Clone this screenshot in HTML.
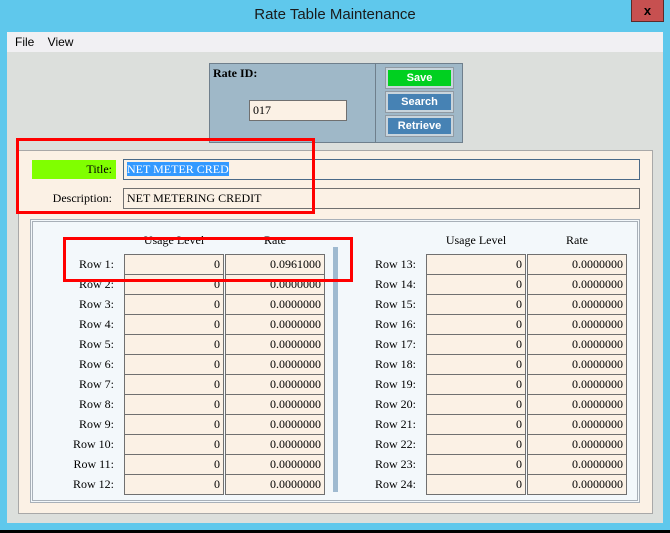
<!DOCTYPE html>
<html><head><style>
*{margin:0;padding:0;box-sizing:border-box}
body{width:670px;height:533px;background:#000;position:relative;overflow:hidden;font-family:"Liberation Serif",serif;font-size:12px;color:#000}
.a{position:absolute}
.inp{position:absolute;background:#fbf1e5;border:1px solid #707070;height:21px;line-height:19px;padding:0 3px;text-align:right;font-size:12px}
.lab{position:absolute;text-align:right;font-size:12px}
.btn{position:absolute;left:385px;width:69px;height:22px;border:1px solid #909aa3;background:#c8d4dc;padding:2px}
.btn div{height:100%;color:#fff;font-family:"Liberation Sans",sans-serif;font-weight:bold;font-size:11px;text-align:center;line-height:16px}
</style></head><body>
<div class="a" style="left:0;top:0;width:670px;height:530px;background:#5fc8ec"></div>
<div class="a" style="left:0;top:6px;width:670px;text-align:center;font-family:'Liberation Sans',sans-serif;font-size:15px;color:#1a1a1a">Rate Table Maintenance</div>
<div class="a" style="left:631px;top:0;width:33px;height:22px;background:#c75050;border:1px solid #5a2a2a;border-top:none;color:#000;font-family:'Liberation Sans',sans-serif;font-weight:bold;font-size:13px;text-align:center;line-height:22px">x</div>
<div class="a" style="left:7px;top:32px;width:656px;height:20px;background:#f1f0f3;font-family:'Liberation Sans',sans-serif;font-size:12px;line-height:20px;padding-left:8px">File&nbsp;&nbsp;&nbsp;&nbsp;View</div>
<div class="a" style="left:7px;top:52px;width:656px;height:471px;background:#dcdfdc"></div>
<!-- Rate ID panel -->
<div class="a" style="left:209px;top:63px;width:167px;height:80px;background:#9fb8c8;border:1px solid #6f7f8c"></div>
<div class="a" style="left:213px;top:66px;font-weight:bold">Rate ID:</div>
<div class="inp" style="left:249px;top:100px;width:98px;text-align:left">017</div>
<div class="a" style="left:375px;top:63px;width:88px;height:80px;background:#9fb8c8;border:1px solid #6f7f8c"></div>
<div class="btn" style="top:67px"><div style="background:#00d020">Save</div></div>
<div class="btn" style="top:91px"><div style="background:#4682b4">Search</div></div>
<div class="btn" style="top:115px"><div style="background:#4682b4">Retrieve</div></div>
<!-- beige panel -->
<div class="a" style="left:18px;top:150px;width:635px;height:364px;background:#fbf1e5;border:1px solid #a8a8a8"></div>
<div class="a" style="left:32px;top:160px;width:84px;height:19px;background:#80ff00;text-align:right;line-height:19px;padding-right:4px">Title:</div>
<div class="inp" style="left:123px;top:159px;width:517px;text-align:left;border-color:#4a6a88"><span style="background:#3399ff;color:#fff">NET METER CRED</span></div>
<div class="lab" style="left:30px;top:191px;width:82px">Description:</div>
<div class="inp" style="left:123px;top:188px;width:517px;text-align:left">NET METERING CREDIT</div>
<!-- table panel -->
<div class="a" style="left:30px;top:219px;width:610px;height:284px;background:#f3f8fb;border:3px double #a8b0b8"></div>
<div class="a" style="left:333px;top:247px;width:5px;height:245px;background:#9fbad0"></div>
<div class="lab" style="left:124px;top:233px;width:100px;text-align:center">Usage Level</div>
<div class="lab" style="left:225px;top:233px;width:100px;text-align:center">Rate</div>
<div class="lab" style="left:426px;top:233px;width:100px;text-align:center">Usage Level</div>
<div class="lab" style="left:527px;top:233px;width:100px;text-align:center">Rate</div>
<div id="rows"></div>
<script>
var h='';
for(var i=0;i<12;i++){var y=254+i*20;
h+='<div class="lab" style="left:40px;top:'+(y+3)+'px;width:74px">Row '+(i+1)+':</div>';
h+='<div class="inp" style="left:124px;top:'+y+'px;width:100px">0</div>';
h+='<div class="inp" style="left:225px;top:'+y+'px;width:100px">'+(i==0?'0.0961000':'0.0000000')+'</div>';
h+='<div class="lab" style="left:340px;top:'+(y+3)+'px;width:76px">Row '+(i+13)+':</div>';
h+='<div class="inp" style="left:426px;top:'+y+'px;width:100px">0</div>';
h+='<div class="inp" style="left:527px;top:'+y+'px;width:100px">0.0000000</div>';}
document.getElementById('rows').innerHTML=h;
</script>
<!-- red boxes -->
<div class="a" style="left:16px;top:138px;width:299px;height:76px;border:3px solid #f00"></div>
<div class="a" style="left:63px;top:237px;width:290px;height:45px;border:3px solid #f00"></div>
</body></html>
